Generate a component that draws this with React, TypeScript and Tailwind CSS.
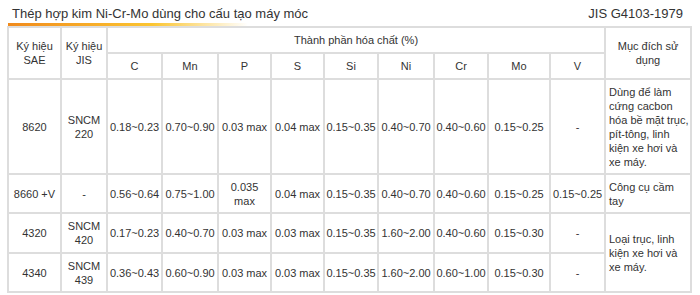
const rows = [
  { sae: '8620', jis: ['SNCM', '220'], c: '0.18~0.23', mn: '0.70~0.90', p: ['0.03 max'], s: '0.04 max', si: '0.15~0.35', ni: '0.40~0.70', cr: '0.40~0.60', mo: '0.15~0.25', v: '-', h: 'h-[95px]' },
  { sae: '8660 +V', jis: ['-'], c: '0.56~0.64', mn: '0.75~1.00', p: ['0.035', 'max'], s: '0.04 max', si: '0.15~0.35', ni: '0.40~0.70', cr: '0.40~0.60', mo: '0.15~0.25', v: '0.15~0.25', h: 'h-[39px]' },
  { sae: '4320', jis: ['SNCM', '420'], c: '0.17~0.23', mn: '0.40~0.70', p: ['0.03 max'], s: '0.03 max', si: '0.15~0.35', ni: '1.60~2.00', cr: '0.40~0.60', mo: '0.15~0.30', v: '-', h: 'h-[40px]' },
  { sae: '4340', jis: ['SNCM', '439'], c: '0.36~0.43', mn: '0.60~0.90', p: ['0.03 max'], s: '0.03 max', si: '0.15~0.35', ni: '1.60~2.00', cr: '0.60~1.00', mo: '0.15~0.30', v: '-', h: 'h-[39px]' },
];

// purpose column, the last one spans the two 43xx rows
const purposes: Record<number, { lines: string[]; span: number }> = {
  0: { lines: ['Dùng để làm', 'cứng cacbon', 'hóa bề mặt trục,', 'pít-tông, linh', 'kiện xe hơi và', 'xe máy.'], span: 1 },
  1: { lines: ['Công cụ cầm', 'tay'], span: 1 },
  2: { lines: ['Loại trục, linh', 'kiện xe hơi và', 'xe máy.'], span: 2 },
};

const widths = [53, 46, 55, 56, 53, 53, 54, 56, 54, 62, 55, 86];
const cell = 'border-2 border-[#dddddd] text-center align-middle p-0';

export default function App() {
  return (
    <div className="w-[700px] h-[295px] bg-white text-[#333] font-['Liberation_Sans',Arial,sans-serif] overflow-hidden">
      <div className="pl-[12px] pr-[17px] pt-[4px] h-[23px] flex justify-between items-center text-[13px] leading-[16px]">
        <span>Thép hợp kim Ni-Cr-Mo dùng cho cấu tạo máy móc</span>
        <span>JIS G4103-1979</span>
      </div>
      <div className="ml-[8px] w-[240px] h-[3px] bg-gradient-to-r from-[#f08a1c] via-[#fbc531] via-60% to-transparent" />
      <table className="ml-[7px] w-[683px] table-fixed border-collapse text-[11px] leading-[14px] text-[#333]">
        <colgroup>
          {widths.map((w, i) => (
            <col key={i} style={{ width: w }} />
          ))}
        </colgroup>
        <thead>
          <tr className="h-[26px]">
            <th rowSpan={2} className={`${cell} font-normal`}>Ký hiệu<br />SAE</th>
            <th rowSpan={2} className={`${cell} font-normal`}>Ký hiệu<br />JIS</th>
            <th colSpan={9} className={`${cell} font-normal`}>Thành phần hóa chất (%)</th>
            <th rowSpan={2} className={`${cell} font-normal`}>Mục đích sử<br />dụng</th>
          </tr>
          <tr className="h-[26px]">
            {['C', 'Mn', 'P', 'S', 'Si', 'Ni', 'Cr', 'Mo', 'V'].map((el) => (
              <th key={el} className={`${cell} font-normal`}>{el}</th>
            ))}
          </tr>
        </thead>
        <tbody>
          {rows.map((r, i) => (
            <tr key={r.sae} className={r.h}>
              <td className={cell}>{r.sae}</td>
              <td className={cell}>{r.jis.map((t, k) => <div key={k}>{t}</div>)}</td>
              <td className={cell}>{r.c}</td>
              <td className={cell}>{r.mn}</td>
              <td className={cell}>{r.p.map((t, k) => <div key={k}>{t}</div>)}</td>
              <td className={cell}>{r.s}</td>
              <td className={cell}>{r.si}</td>
              <td className={cell}>{r.ni}</td>
              <td className={cell}>{r.cr}</td>
              <td className={cell}>{r.mo}</td>
              <td className={cell}>{r.v}</td>
              {purposes[i] && (
                <td rowSpan={purposes[i].span} className="border-2 border-[#dddddd] text-left align-middle pl-[3px] pr-0 py-0 whitespace-nowrap">
                  {purposes[i].lines.map((t, k) => <div key={k}>{t}</div>)}
                </td>
              )}
            </tr>
          ))}
        </tbody>
      </table>
    </div>
  );
}
